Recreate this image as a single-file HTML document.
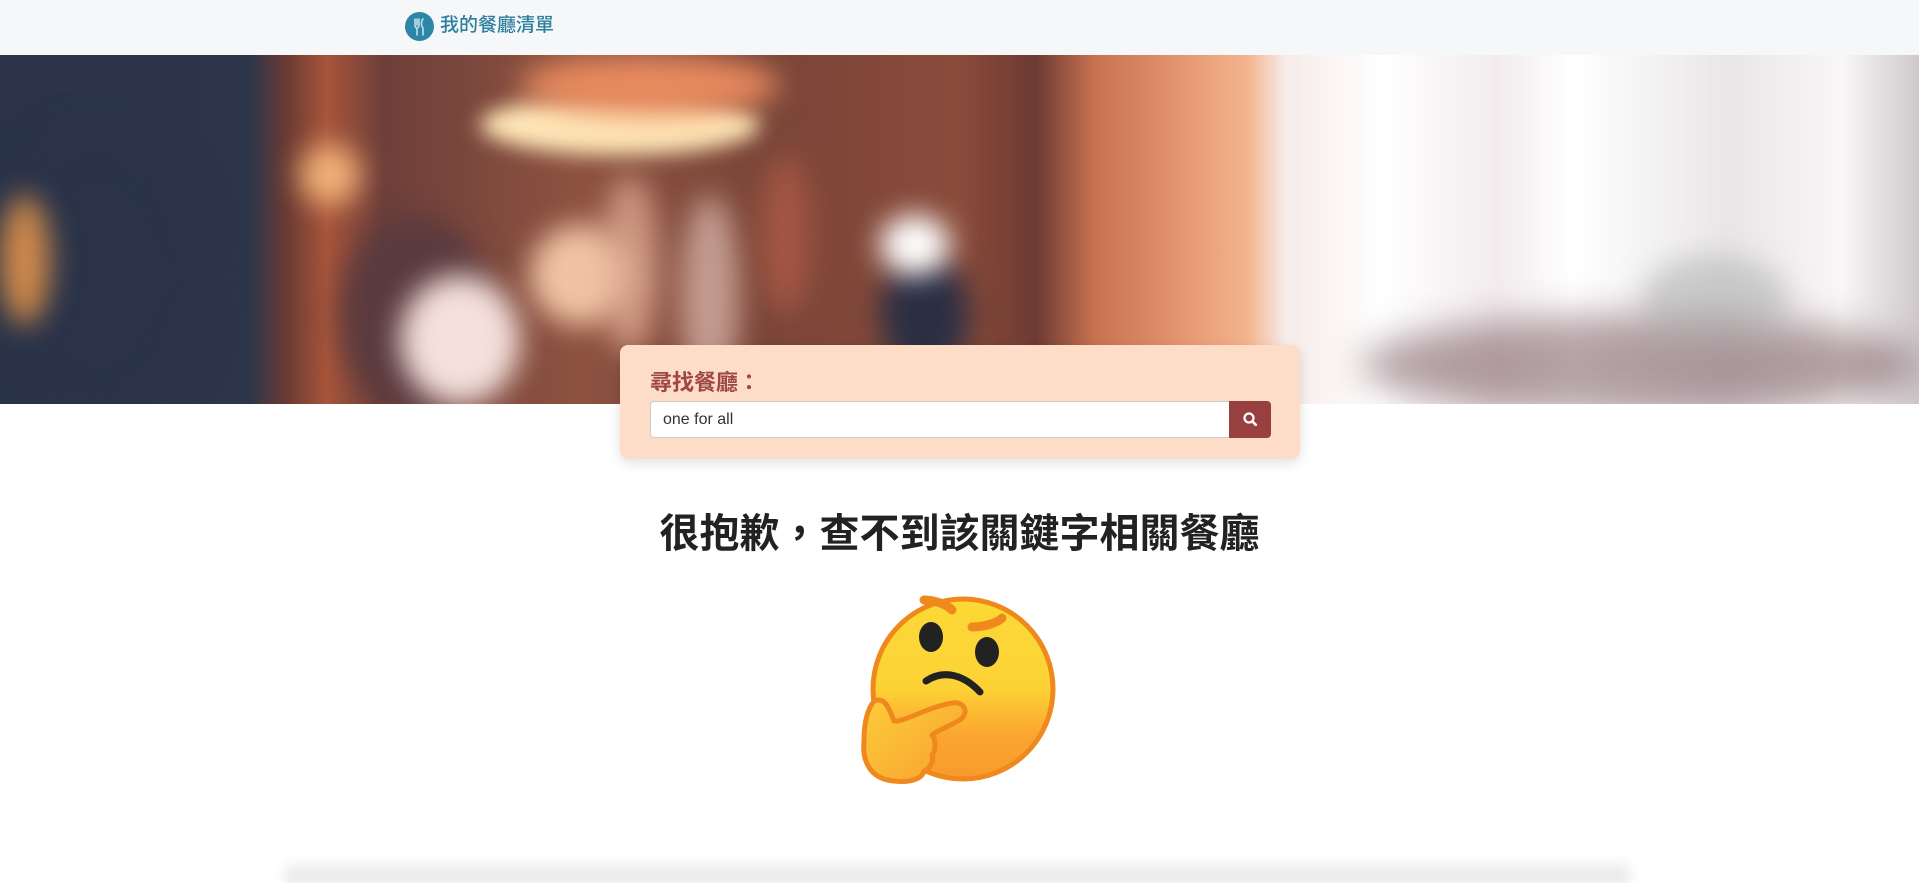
<!DOCTYPE html>
<html><head><meta charset="utf-8">
<style>
*{margin:0;padding:0;box-sizing:border-box}
html,body{width:1919px;height:883px;overflow:hidden}
body{background:#fff;font-family:"Liberation Sans","Noto Sans CJK TC",sans-serif;position:relative}
.nav{position:absolute;left:0;top:0;width:1919px;height:55px;background:#f6f7f9}
.logo{position:absolute;left:405px;top:12px;width:29px;height:29px;border-radius:50%;background:#2d86a6}
.brand{position:absolute;left:440px;top:13px;font-size:19px;color:#2d7f9f;font-weight:500;line-height:26px}
.hero{position:absolute;left:0;top:55px;width:1919px;height:349px;overflow:hidden;
background:linear-gradient(90deg,#2a3349 0%,#2d354a 13%,#6b3b33 15%,#a8553a 17%,#6e3f3a 20%,#8d5240 30%,#7a4538 40%,#8a4b3a 50%,#6d3a33 54%,#c7714f 57%,#e79a73 62%,#f3b48e 65%,#f6ece9 67%,#fff 72%,#f2ecee 78%,#fff 82%,#e9e6e8 90%,#f8f6f6 96%,#cfc9cc 100%)}
.b{position:absolute;border-radius:50%;filter:blur(14px)}
.box{position:absolute;left:620px;top:345px;width:680px;height:114px;background:#fddcc8;border-radius:8px;box-shadow:0 4px 12px rgba(0,0,0,.12)}
.lbl{position:absolute;left:30px;top:20px;font-size:22px;font-weight:bold;color:#a04646}
.inp{position:absolute;left:30px;top:56px;width:580px;height:37px;background:#fff;border:1px solid #ccc;border-radius:4px 0 0 4px;font-size:16px;color:#333;padding:8px 12px;line-height:20px}
.btn{position:absolute;left:609px;top:56px;width:42px;height:37px;background:#983f3f;border-radius:0 4px 4px 0}
h1{position:absolute;left:0;width:1919px;top:507px;text-align:center;font-size:40px;font-weight:bold;color:#222;line-height:54px}
.shadow{position:absolute;left:285px;top:858px;width:1345px;height:25px;background:linear-gradient(180deg,rgba(0,0,0,0),rgba(0,0,0,.13));filter:blur(6px)}
</style></head><body>
<div class="nav">
<div class="logo"><svg width="29" height="29" viewBox="0 0 29 29"><g stroke="#bfe0ea" stroke-width="1.6" fill="none" stroke-linecap="round"><path d="M10 7v6c0 2 1 3 2 3M14 7v6c0 2-1 3-2 3M12 7v6M12 16v7"/><path d="M18 7c-2 2-2 7 0 9v7"/></g></svg></div>
<div class="brand">我的餐廳清單</div>
</div>
<div class="hero">
<div class="b" style="left:480px;top:40px;width:280px;height:60px;background:#ffe7b8;filter:blur(10px)"></div>
<div class="b" style="left:520px;top:0;width:260px;height:60px;background:#e88a5e"></div>
<div class="b" style="left:300px;top:90px;width:60px;height:60px;background:#f0b27a"></div>
<div class="b" style="left:0;top:80px;width:200px;height:280px;background:#2a3349;filter:blur(20px)"></div>
<div class="b" style="left:0;top:140px;width:50px;height:130px;background:#d08a4a"></div>
<div class="b" style="left:340px;top:160px;width:150px;height:200px;background:#5a3a3e"></div>
<div class="b" style="left:400px;top:220px;width:120px;height:130px;background:#f5e0dc"></div>
<div class="b" style="left:530px;top:170px;width:100px;height:100px;background:#f1c3a4"></div>
<div class="b" style="left:600px;top:120px;width:60px;height:180px;background:#e7b39a;opacity:.7"></div>
<div class="b" style="left:680px;top:140px;width:60px;height:200px;background:#f0d2c8;opacity:.6"></div>
<div class="b" style="left:760px;top:100px;width:50px;height:160px;background:#b55e48;opacity:.7"></div>
<div class="b" style="left:880px;top:200px;width:90px;height:120px;background:#2b2f44"></div>
<div class="b" style="left:880px;top:160px;width:70px;height:60px;background:#fff"></div>
<div class="b" style="left:1360px;top:260px;width:560px;height:100px;background:#6b4850;filter:blur(18px);opacity:.5"></div>
<div class="b" style="left:1640px;top:200px;width:150px;height:90px;background:#a9aaa8;opacity:.5"></div>
</div>
<div class="box">
<div class="lbl">尋找餐廳：</div>
<div class="inp">one for all</div>
<div class="btn"><svg width="42" height="37" viewBox="0 0 42 37"><circle cx="20" cy="17" r="4.5" stroke="#fff" stroke-width="2.2" fill="none"/><path d="M23.3 20.3l3.5 3.5" stroke="#fff" stroke-width="2.6" stroke-linecap="round"/></svg></div>
</div>
<h1>很抱歉，查不到該關鍵字相關餐廳</h1>
<svg style="position:absolute;left:850px;top:585px" width="220" height="210" viewBox="0 0 220 210">
<defs><linearGradient id="g" x1="0" y1="0" x2="0" y2="1"><stop offset="0" stop-color="#fcd935"/><stop offset=".5" stop-color="#fdd236"/><stop offset=".75" stop-color="#fba631"/><stop offset="1" stop-color="#f89a2e"/></linearGradient>
<linearGradient id="h" x1="0" y1="0" x2="1" y2="1"><stop offset="0" stop-color="#fccd3a"/><stop offset="1" stop-color="#f9a030"/></linearGradient></defs>
<circle cx="113" cy="104" r="90" fill="url(#g)" stroke="#f0891d" stroke-width="5"/>
<path d="M74 15c10 0 22 4 28 10" stroke="#f0891d" stroke-width="9" fill="none" stroke-linecap="round"/>
<path d="M122 42c10 0 24-3 30-9" stroke="#f0891d" stroke-width="9" fill="none" stroke-linecap="round"/>
<ellipse cx="81" cy="52" rx="12" ry="15" fill="#222"/>
<ellipse cx="137" cy="67" rx="12" ry="15" fill="#222"/>
<path d="M76 96c18-12 38-6 54 11" stroke="#222" stroke-width="7" fill="none" stroke-linecap="round"/>
<path d="M24 116c10-4 14 4 20 20 8 2 34-14 58-18 14-2 18 12 6 18-10 6-22 10-26 14 4 4 4 16 0 20 2 6-2 14-8 16-2 8-14 12-30 10-24-2-32-20-30-40 0-14 2-30 10-40z" fill="url(#h)" stroke="#f0891d" stroke-width="5" stroke-linejoin="round"/>
</svg>
<div class="shadow"></div>
</body></html>
